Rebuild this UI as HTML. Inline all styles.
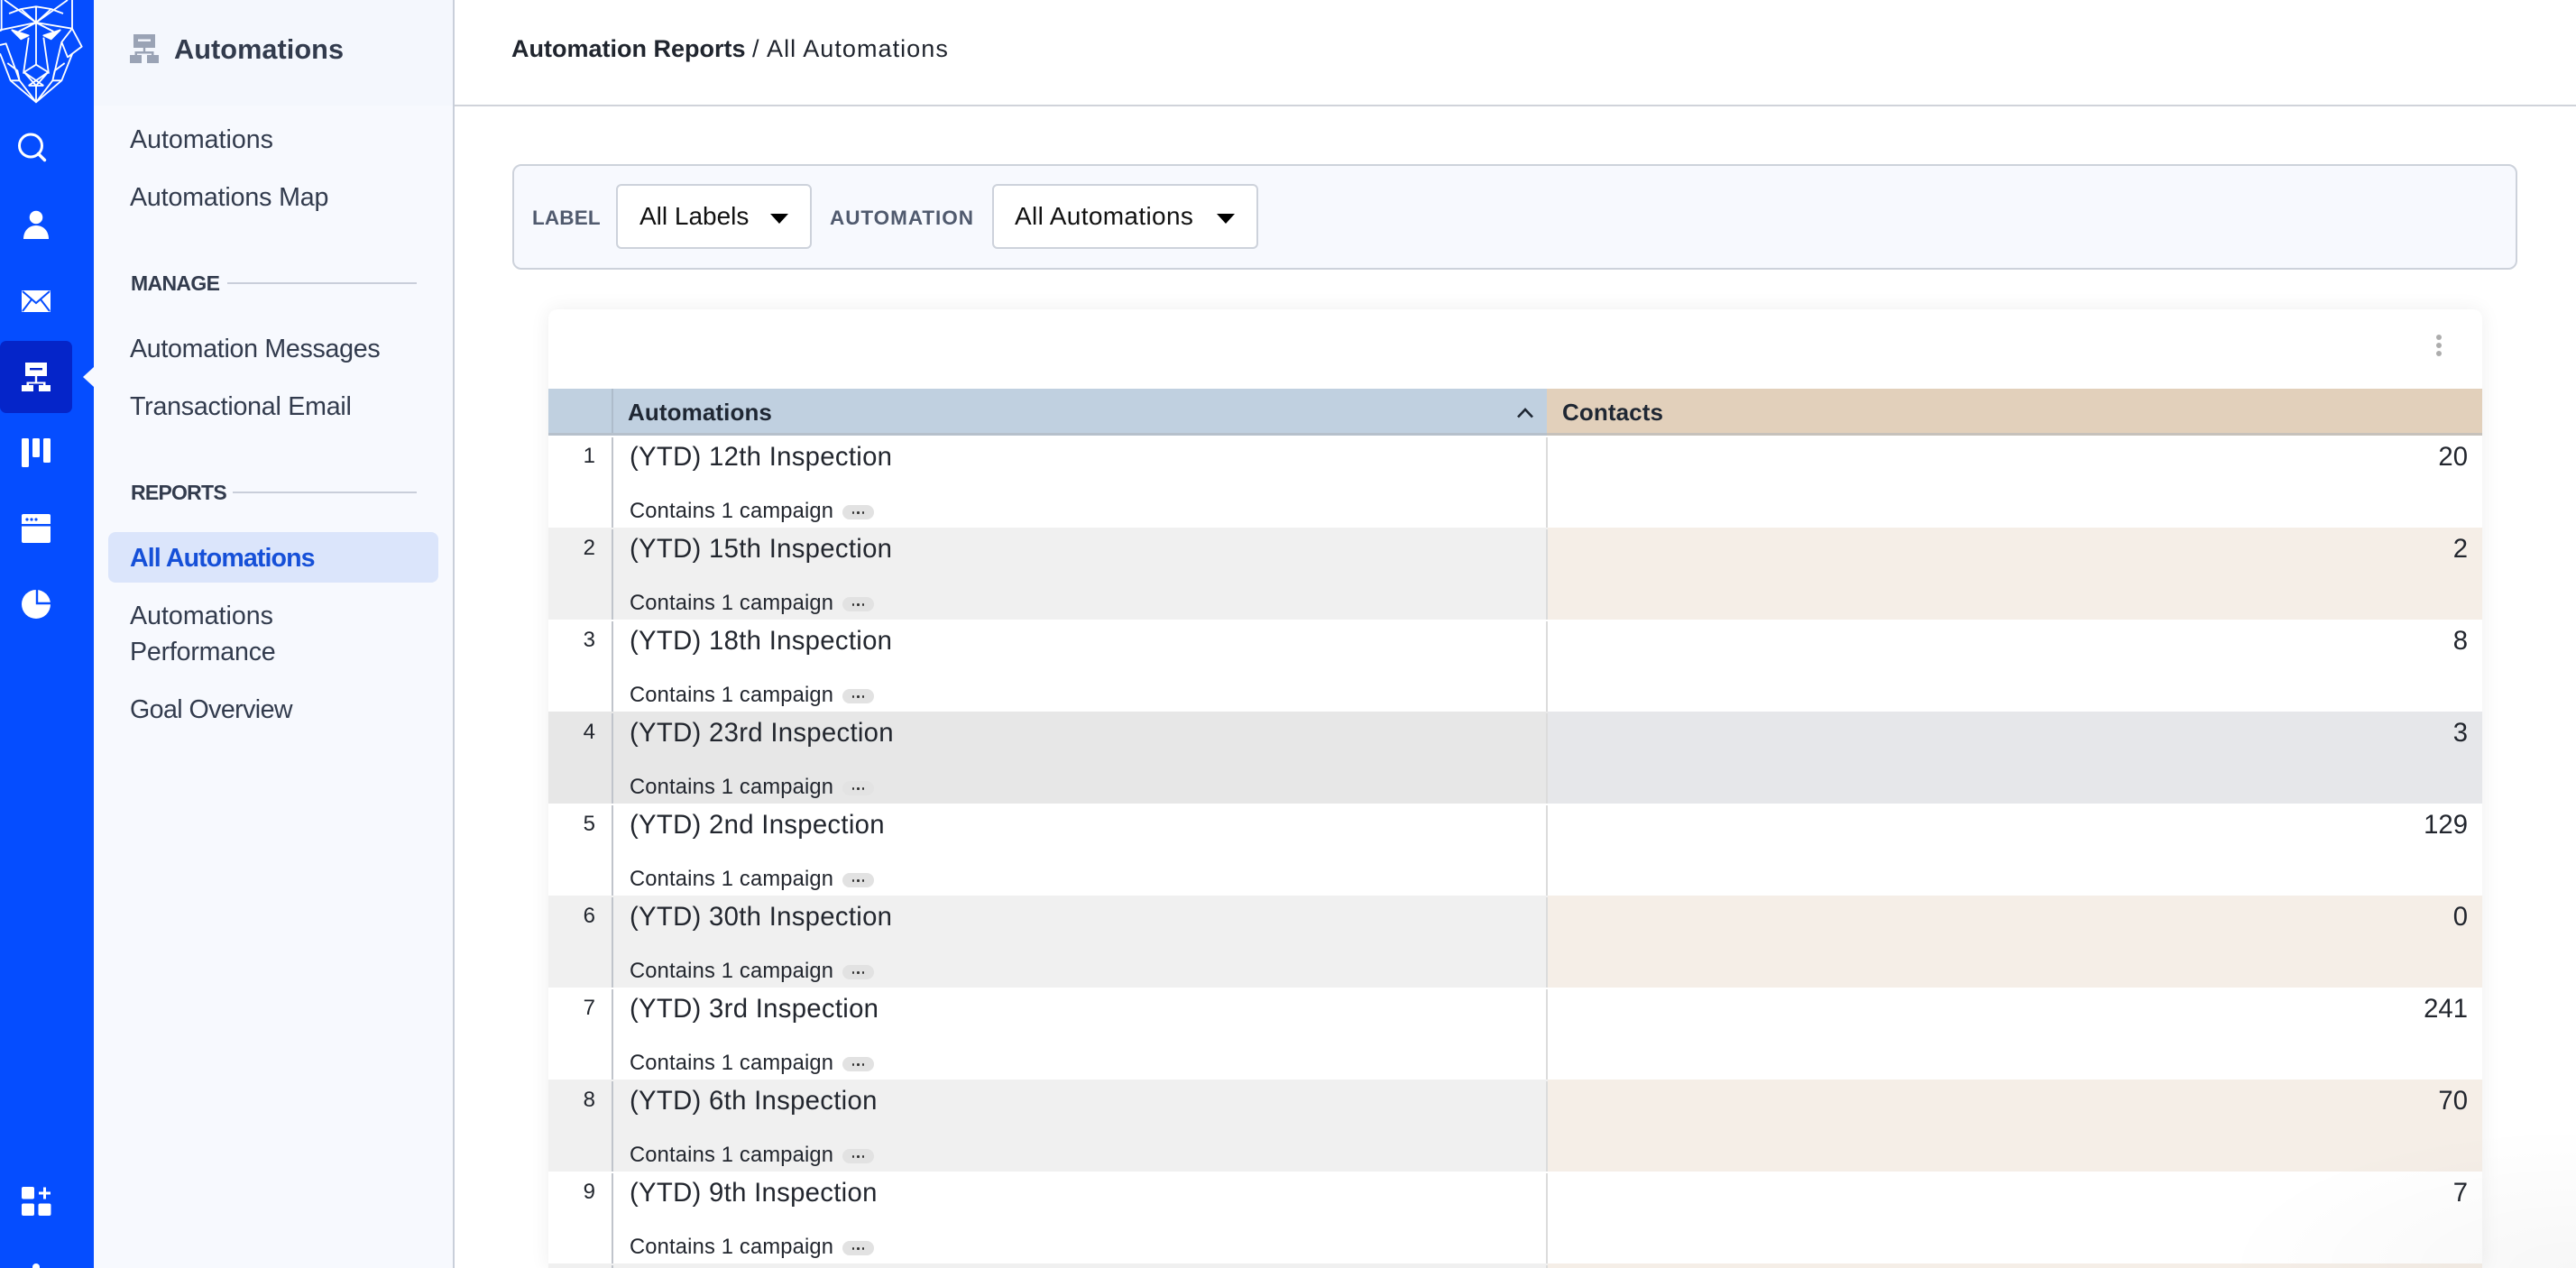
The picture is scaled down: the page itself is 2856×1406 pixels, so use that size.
<!DOCTYPE html>
<html lang="en"><head><meta charset="utf-8"><title>Automation Reports</title>
<style>
html,body{margin:0;padding:0;width:2856px;height:1406px;overflow:hidden;background:#fff;font-family:"Liberation Sans",sans-serif;color:#323b4d}
*{box-sizing:border-box}
#wrap{position:absolute;left:0;top:0;width:2856px;height:1406px;overflow:hidden}
.a{position:absolute}
.t{position:absolute;white-space:nowrap;line-height:40px;height:40px}
#nav{position:absolute;left:0;top:0;width:104px;height:1406px;background:#054dff;overflow:hidden}
#side{position:absolute;left:104px;top:0;width:400px;height:1406px;background:#f7f9fe;border-right:2px solid #c9cfda}
#sidehead{position:absolute;left:0;top:0;width:398px;height:117px;background:#f4f7fd}
.n{font-size:28.6px;color:#323b4d}
.h{font-size:23px;font-weight:bold;color:#323b4d}
.ln{position:absolute;height:2px;background:#c9ceda}
#top{position:absolute;left:504px;top:116px;right:0;height:2px;background:#d0d3da}
#filter{position:absolute;left:568px;top:182px;width:2223px;height:117px;background:#f7f9fe;border:2px solid #cdd2db;border-radius:10px}
.sel{position:absolute;top:204px;height:72px;background:#fff;border:2px solid #cdd2db;border-radius:6px}
.fl{font-size:22.5px;font-weight:bold;color:#505a6e}
.fv{font-size:28px;color:#111}
.arrow{position:absolute;top:237px;width:0;height:0;border-left:10px solid transparent;border-right:10px solid transparent;border-top:11px solid #000}
#card{position:absolute;left:608px;top:343px;width:2144px;height:1063px;background:#fff;border-radius:10px 10px 0 0;box-shadow:0 0 22px rgba(0,0,0,.07);overflow:hidden}
#hl{position:absolute;left:0;top:88px;width:1107px;height:52px;background:#c0d0e0;border-bottom:3px solid #b6c0cb}
#hr{position:absolute;left:1107px;top:88px;width:1037px;height:52px;background:#e2d0bb;border-bottom:3px solid #c6c1bb}
#hd{position:absolute;left:70px;top:88px;width:2px;height:49px;background:#aebccb}
.th{font-size:26px;font-weight:bold;color:#1f2733;letter-spacing:.1px}
.row{position:absolute;left:0;width:2144px;height:102px;background:#fff}
.row.alt{background:#f0f0f0}
.row.alt .c{background:#f5eee7}
.row.hov{background:#e7e7e7}
.row.hov .c{background:#e6e7ea}
.c{position:absolute;left:1108px;top:0;width:1036px;height:102px}
.d1{position:absolute;left:70px;top:2px;width:2px;height:100px;background:#c0c4cb}
.d2{position:absolute;left:1106px;top:2px;width:2px;height:100px;background:#dcdcdc}
.num{position:absolute;left:20px;width:32px;top:3px;text-align:right;font-size:24px;line-height:40px;color:#22262e}
.nm{position:absolute;left:90px;top:4px;font-size:29.3px;letter-spacing:.3px;line-height:40px;color:#22262e;white-space:nowrap}
.ct{position:absolute;left:90px;top:64px;font-size:23.7px;letter-spacing:.19px;line-height:40px;color:#22262e;white-space:nowrap}
.pill{position:absolute;left:326px;top:77px;width:35px;height:16px;border-radius:8px;background:#e2e2e2}
.pill i{position:absolute;top:7px;width:2.6px;height:2.6px;border-radius:50%;background:#333}
.pill i:nth-child(1){left:10.5px}.pill i:nth-child(2){left:16px}.pill i:nth-child(3){left:21.5px}
.val{position:absolute;right:16px;top:4px;font-size:29.3px;line-height:40px;color:#22262e}
#fade{position:absolute;left:2456px;top:1246px;width:400px;height:160px;background:radial-gradient(ellipse at 100% 100%,rgba(0,0,0,.03),rgba(0,0,0,0) 70%);pointer-events:none}
</style></head><body>
<div id="wrap">
<div id="nav">
<svg class="a" style="left:0;top:0" width="104" height="120" viewBox="0 0 312 360" fill="none" stroke="#fff" stroke-width="5.5" stroke-linejoin="round">
<path d="M15 0L120 75L225 0M5 0V100L0 103M240 0V95L272 155L225 190L240 180L205 268L120 340L35 268L5 190L0 178"/>
<path d="M30 45L70 30L120 22L170 30L210 45M70 30L120 75L170 30M120 22V215M120 75L62 105M120 75L178 105M0 100L120 75L240 95"/>
<path d="M0 150L20 145L65 268M240 95L205 140L225 190M205 140L175 268M35 268H65L120 340L175 268H205M25 210L58 235L65 268M215 210L182 235L175 268"/>
<path d="M95 125L78 245M145 125L162 245M120 215L80 240L120 285L160 240ZM80 240L145 285M160 240L95 285M95 285H145M120 285V340"/>
<path d="M40 100L95 118L70 130ZM200 100L145 118L170 130Z" fill="#fff"/>
</svg>
<svg class="a" style="left:0;top:0" width="104" height="1406" fill="#fff">
<circle cx="34" cy="161.500" r="12.500" fill="none" stroke="#fff" stroke-width="3"/><path d="M42.500 170.500L49.500 177.500" stroke="#fff" stroke-width="3.400" stroke-linecap="round" fill="none"/>
<circle cx="40" cy="241" r="7.300"/><path d="M26 265C26 256 32 250 40 250S54 256 54 265Z"/>
<rect x="24" y="322" width="32" height="24" rx="1"/><path d="M25 323L40 336L55 323M25 345L35 332M55 345L45 332" fill="none" stroke="#054dff" stroke-width="2"/>
<rect x="0" y="378" width="80" height="80" rx="7" fill="#0525c9"/>
<path d="M28 402H52V417H41.200V423.500H50.500V427H56V434H43V427H48V425.500H32V427H37V434H24V427H29.500V423.500H38.800V417H28Z"/><rect x="33" y="408" width="14" height="2.400" fill="#0525c9"/>
<path d="M104 407L92 418L104 429Z" fill="#f7f9fe"/>
<rect x="24" y="486" width="8" height="32" rx="1.500"/><rect x="36" y="486" width="8" height="21" rx="1.500"/><rect x="48" y="486" width="8" height="27" rx="1.500"/>
<path d="M24 572a2 2 0 0 1 2-2H54a2 2 0 0 1 2 2V581H24ZM24 583.500H56V600a2 2 0 0 1-2 2H26a2 2 0 0 1-2-2Z"/>
<circle cx="30" cy="576" r="1.600" fill="#054dff"/><circle cx="35" cy="576" r="1.600" fill="#054dff"/><circle cx="40" cy="576" r="1.600" fill="#054dff"/>
<circle cx="40" cy="670" r="16"/><path d="M41 652V669H58" fill="none" stroke="#054dff" stroke-width="2.400"/>
<rect x="24" y="1316" width="14" height="13.500" rx="2"/><rect x="24" y="1334.500" width="14" height="13.500" rx="2"/><rect x="42.500" y="1334.500" width="14" height="13.500" rx="2"/>
<rect x="43" y="1321.500" width="13" height="3"/><rect x="48" y="1316.500" width="3" height="13"/>
<path d="M36 1406V1405a4 4 0 0 1 8 0V1406Z"/>
</svg>
</div>

<div id="side"><div id="sidehead"></div></div>
<svg class="a" style="left:144px;top:38px" width="32" height="32" fill="#9aa3b5">
<path d="M4 0H28V15H17.200V19H26.500V23H32V32H19V23H24V21.500H8V23H13V32H0V23H5.500V19H14.800V15H4Z"/><rect x="9" y="5.500" width="14" height="2.400" fill="#f4f7fd"/>
</svg>
<div class="t" style="left:193px;top:35px;font-size:30.7px;font-weight:bold;color:#323b4d;letter-spacing:.05px">Automations</div>
<div class="t n" style="left:144px;top:135px">Automations</div>
<div class="t n" style="left:144px;top:199px;letter-spacing:-.15px">Automations Map</div>
<div class="t h" style="left:145px;top:294px;letter-spacing:-.65px">MANAGE</div><div class="ln" style="left:252px;top:313px;width:210px"></div>
<div class="t n" style="left:144px;top:367px;letter-spacing:-.29px">Automation Messages</div>
<div class="t n" style="left:144px;top:431px;letter-spacing:-.23px">Transactional Email</div>
<div class="t h" style="left:145px;top:526px;letter-spacing:-.75px">REPORTS</div><div class="ln" style="left:258px;top:545px;width:204px"></div>
<div class="a" style="left:120px;top:590px;width:366px;height:56px;background:#dbe5fb;border-radius:8px"></div>
<div class="t" style="left:144px;top:599px;font-size:28.6px;font-weight:bold;color:#1650d8;letter-spacing:-.9px">All Automations</div>
<div class="t n" style="left:144px;top:663px">Automations</div>
<div class="t n" style="left:144px;top:703px;letter-spacing:-.2px">Performance</div>
<div class="t n" style="left:144px;top:767px;letter-spacing:-.58px">Goal Overview</div>

<div id="top"></div>
<div class="t" style="left:567px;top:34px;font-size:27px;color:#20252e"><b>Automation Reports</b> / <span style="letter-spacing:1.05px;margin-left:1px">All Automations</span></div>

<div id="filter"></div>
<div class="t fl" style="left:590px;top:222px;letter-spacing:.15px">LABEL</div>
<div class="sel" style="left:683px;width:217px"></div>
<div class="t fv" style="left:709px;top:220px">All Labels</div>
<div class="arrow" style="left:854px"></div>
<div class="t fl" style="left:920px;top:222px;letter-spacing:.95px">AUTOMATION</div>
<div class="sel" style="left:1100px;width:295px"></div>
<div class="t fv" style="left:1125px;top:220px;letter-spacing:.35px">All Automations</div>
<div class="arrow" style="left:1349px"></div>

<div id="card">
<svg class="a" style="left:2087px;top:24px" width="18" height="36" fill="#adadad"><circle cx="9" cy="7" r="3"/><circle cx="9" cy="16" r="3"/><circle cx="9" cy="25" r="3"/></svg>
<div id="hl"></div><div id="hr"></div><div id="hd"></div>
<div class="t th" style="left:88px;top:94px">Automations</div>
<div class="t th" style="left:1124px;top:94px">Contacts</div>
<svg class="a" style="left:1072px;top:108px" width="22" height="14" fill="none" stroke="#1f2733" stroke-width="2.600"><path d="M3 11.500L11 3L19 11.500"/></svg>

<div class="row" style="top:140px"><div class="c"></div><div class="d1"></div><div class="d2"></div><div class="num">1</div><div class="nm">(YTD) 12th Inspection</div><div class="ct">Contains 1 campaign</div><div class="pill"><i></i><i></i><i></i></div><div class="val">20</div></div>
<div class="row alt" style="top:242px"><div class="c"></div><div class="d1"></div><div class="d2"></div><div class="num">2</div><div class="nm">(YTD) 15th Inspection</div><div class="ct">Contains 1 campaign</div><div class="pill"><i></i><i></i><i></i></div><div class="val">2</div></div>
<div class="row" style="top:344px"><div class="c"></div><div class="d1"></div><div class="d2"></div><div class="num">3</div><div class="nm">(YTD) 18th Inspection</div><div class="ct">Contains 1 campaign</div><div class="pill"><i></i><i></i><i></i></div><div class="val">8</div></div>
<div class="row alt hov" style="top:446px"><div class="c"></div><div class="d1"></div><div class="d2"></div><div class="num">4</div><div class="nm">(YTD) 23rd Inspection</div><div class="ct">Contains 1 campaign</div><div class="pill" style="background:#e3e3e3"><i></i><i></i><i></i></div><div class="val">3</div></div>
<div class="row" style="top:548px"><div class="c"></div><div class="d1"></div><div class="d2"></div><div class="num">5</div><div class="nm">(YTD) 2nd Inspection</div><div class="ct">Contains 1 campaign</div><div class="pill"><i></i><i></i><i></i></div><div class="val">129</div></div>
<div class="row alt" style="top:650px"><div class="c"></div><div class="d1"></div><div class="d2"></div><div class="num">6</div><div class="nm">(YTD) 30th Inspection</div><div class="ct">Contains 1 campaign</div><div class="pill"><i></i><i></i><i></i></div><div class="val">0</div></div>
<div class="row" style="top:752px"><div class="c"></div><div class="d1"></div><div class="d2"></div><div class="num">7</div><div class="nm">(YTD) 3rd Inspection</div><div class="ct">Contains 1 campaign</div><div class="pill"><i></i><i></i><i></i></div><div class="val">241</div></div>
<div class="row alt" style="top:854px"><div class="c"></div><div class="d1"></div><div class="d2"></div><div class="num">8</div><div class="nm">(YTD) 6th Inspection</div><div class="ct">Contains 1 campaign</div><div class="pill"><i></i><i></i><i></i></div><div class="val">70</div></div>
<div class="row" style="top:956px"><div class="c"></div><div class="d1"></div><div class="d2"></div><div class="num">9</div><div class="nm">(YTD) 9th Inspection</div><div class="ct">Contains 1 campaign</div><div class="pill"><i></i><i></i><i></i></div><div class="val">7</div></div>
<div class="row alt" style="top:1058px;height:5px;overflow:hidden"><div class="c" style="height:5px"></div><div class="d1" style="height:3px"></div><div class="d2" style="height:3px"></div></div>
</div>
<div id="fade"></div>
</div>
</body></html>
